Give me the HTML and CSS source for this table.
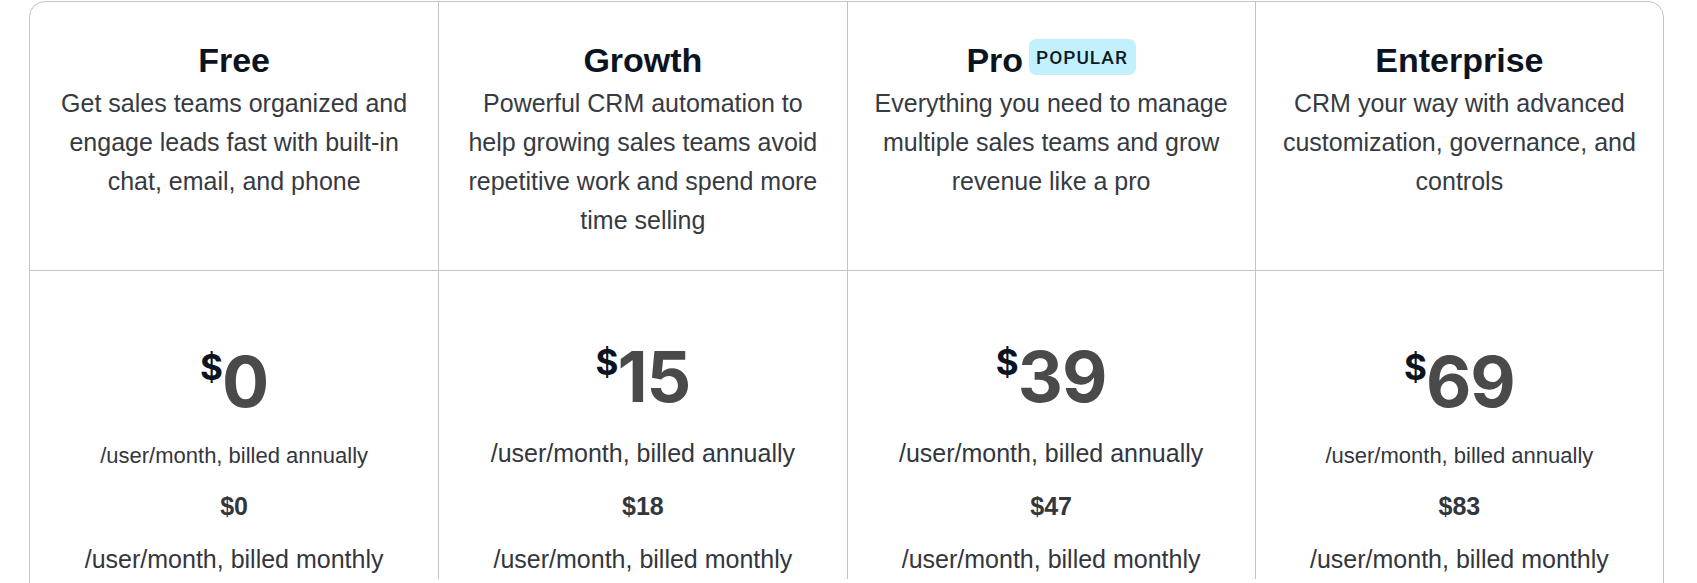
FILE: index.html
```html
<!DOCTYPE html>
<html lang="en">
<head>
<meta charset="utf-8">
<title>Pricing</title>
<link rel="stylesheet" href="styles.css">
</head>
<body>
<main class="page">
  <section class="plans">
    <div class="plan-head">
      <div class="plan-title-row"><h2 class="plan-title">Free</h2></div>
      <p class="plan-desc">Get sales teams organized and engage leads fast with built-in chat, email, and phone</p>
    </div>
    <div class="plan-head">
      <div class="plan-title-row"><h2 class="plan-title">Growth</h2></div>
      <p class="plan-desc">Powerful CRM automation to help growing sales teams avoid repetitive work and spend more time selling</p>
    </div>
    <div class="plan-head">
      <div class="plan-title-row"><h2 class="plan-title">Pro</h2><span class="badge">POPULAR</span></div>
      <p class="plan-desc">Everything you need to manage multiple sales teams and grow revenue like a pro</p>
    </div>
    <div class="plan-head">
      <div class="plan-title-row"><h2 class="plan-title">Enterprise</h2></div>
      <p class="plan-desc">CRM your way with advanced customization, governance, and controls</p>
    </div>

    <div class="plan-price plan-price--basic">
      <div class="amount"><span class="currency">$</span><span class="value">0</span></div>
      <p class="period">/user/month, billed annually</p>
      <p class="monthly-price">$0</p>
      <p class="period period--monthly">/user/month, billed monthly</p>
    </div>
    <div class="plan-price">
      <div class="amount"><span class="currency">$</span><span class="value">15</span></div>
      <p class="period">/user/month, billed annually</p>
      <p class="monthly-price">$18</p>
      <p class="period period--monthly">/user/month, billed monthly</p>
    </div>
    <div class="plan-price">
      <div class="amount"><span class="currency">$</span><span class="value">39</span></div>
      <p class="period">/user/month, billed annually</p>
      <p class="monthly-price">$47</p>
      <p class="period period--monthly">/user/month, billed monthly</p>
    </div>
    <div class="plan-price plan-price--basic">
      <div class="amount"><span class="currency">$</span><span class="value">69</span></div>
      <p class="period">/user/month, billed annually</p>
      <p class="monthly-price">$83</p>
      <p class="period period--monthly">/user/month, billed monthly</p>
    </div>
  </section>
</main>
</body>
</html>
```

FILE: styles.css
```css
html, body {
  margin: 0;
  padding: 0;
  overflow: hidden;
  background: #ffffff;
}

body {
  font-family: "Liberation Sans", Arial, sans-serif;
  color: #33363d;
}

.page {
  padding: 1px 33px 0 29px;
}

.plans {
  display: grid;
  grid-template-columns: repeat(4, 1fr);
  border: 1px solid #c4c4c6;
  border-radius: 16px;
  padding-bottom: 40px;
}

.plan-head {
  padding: 38px 10px 30px;
  border-bottom: 1px solid #c4c4c6;
  border-left: 1px solid #c4c4c6;
  display: flex;
  flex-direction: column;
  align-items: center;
  text-align: center;
}

.plan-head:first-child,
.plan-price:nth-child(5) {
  border-left: none;
}

.plan-title-row {
  display: flex;
  justify-content: center;
  align-items: flex-start;
  gap: 6px;
  margin-bottom: 4px;
}

.plan-title {
  margin: 0;
  font-size: 34px;
  line-height: 40px;
  font-weight: 700;
  color: #0d1421;
}

.badge {
  display: inline-flex;
  align-items: center;
  height: 36px;
  margin-top: -1px;
  padding: 0 8px 0 7px;
  border-radius: 7px;
  background: #c2f0fc;
  color: #0d1a26;
  font-family: Roboto, "Liberation Sans", sans-serif;
  font-weight: 500;
  font-size: 19px;
  letter-spacing: 1px;
}

.plan-desc {
  margin: 0;
  max-width: 362px;
  font-size: 25px;
  line-height: 39px;
  color: #363a42;
}

.plan-price {
  border-left: 1px solid #c4c4c6;
  padding-top: 71px;
  display: flex;
  flex-direction: column;
  align-items: center;
  text-align: center;
}

.plan-price--basic {
  padding-top: 76px;
}

.amount {
  display: flex;
  justify-content: center;
  align-items: flex-start;
  height: 70px;
}

.currency {
  font-family: Inter, "Liberation Sans", sans-serif;
  font-weight: 700;
  font-size: 35px;
  line-height: 35px;
  margin-top: 3px;
  margin-right: -1px;
  color: #0d1421;
}

.value {
  font-family: Inter, "Liberation Sans", sans-serif;
  font-weight: 700;
  font-size: 70px;
  line-height: 70px;
  color: #4a4a4a;
  letter-spacing: -1px;
}

.period {
  margin: 22px 0 0;
  font-size: 25px;
  line-height: 39px;
  color: #33363d;
}

.plan-price--basic .period:not(.period--monthly) {
  margin-top: 21px;
  font-size: 22px;
  line-height: 35px;
}

.period--monthly {
  margin-top: 14px;
}

.monthly-price {
  margin: 14px 0 0;
  font-size: 25px;
  line-height: 39px;
  font-weight: 700;
  color: #33363d;
}
```
